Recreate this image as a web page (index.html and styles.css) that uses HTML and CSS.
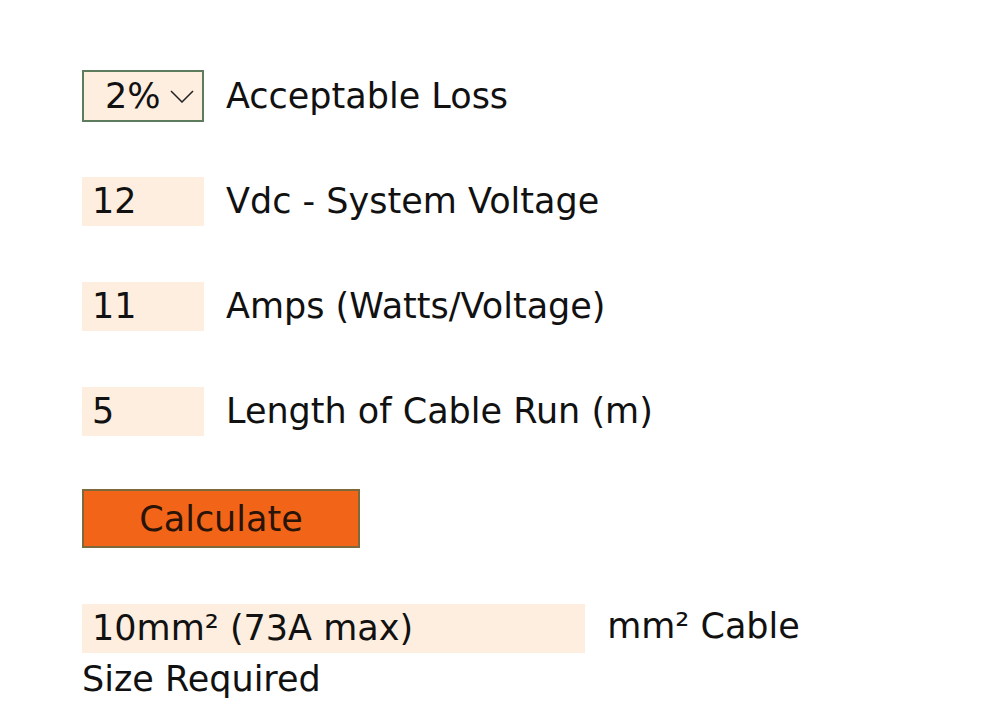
FILE: index.html
```html
<!DOCTYPE html>
<html lang="en">
<head>
    <meta charset="UTF-8">
    <meta name="viewport" content="width=device-width, initial-scale=1.0">
    <title>Cable Size Calculator</title>
    <link rel="stylesheet" href="styles.css">
</head>
<body>

    <div class="calculator">
        <div class="row">
            <select id="loss" class="field select-field">
                <option value="2" selected>2%</option>
                <option value="3">3%</option>
                <option value="5">5%</option>
            </select>
            <label for="loss">Acceptable Loss</label>
        </div>

        <div class="row">
            <input type="text" id="voltage" class="field" value="12">
            <label for="voltage">Vdc - System Voltage</label>
        </div>

        <div class="row">
            <input type="text" id="amps" class="field" value="11">
            <label for="amps">Amps (Watts/Voltage)</label>
        </div>

        <div class="row">
            <input type="text" id="length" class="field" value="5">
            <label for="length">Length of Cable Run (m)</label>
        </div>

        <div class="row">
            <button type="button" id="calc-btn">Calculate</button>
        </div>

        <p class="result">
            <input type="text" id="result" class="field result-field" value="10mm² (73A max)" readonly>
            <span class="result-label">mm² Cable Size Required</span>
        </p>
    </div>

</body>
</html>
```

FILE: styles.css
```css
/* Reset */
* {
    margin: 0;
    padding: 0;
    box-sizing: border-box;
}

body {
    font-family: 'DejaVu Sans', sans-serif;
    background-color: #fff;
    color: #111;
}

.calculator {
    width: 800px;
    padding: 70px 0 0 82px;
}

.row {
    display: flex;
    align-items: center;
    gap: 22px;
    height: 52px;
    margin-bottom: 53px;
    font-size: 35px;
}

/* Inputs */
.field {
    font-family: inherit;
    font-size: 35px;
    color: #111;
    width: 122px;
    height: 49px;
    padding: 0 10px;
    border: none;
    outline: none;
    background-color: #fdeedf;
}

.select-field {
    -webkit-appearance: none;
    appearance: none;
    height: 52px;
    padding-left: 21px;
    border: 2px solid #5d7b5d;
    background-image: url("data:image/svg+xml,%3Csvg xmlns='http://www.w3.org/2000/svg' width='24' height='13' viewBox='0 0 24 13'%3E%3Cpath d='M1 1l11 11 11-11' fill='none' stroke='%23222' stroke-width='1.5'/%3E%3C/svg%3E");
    background-repeat: no-repeat;
    background-position: right 8px center;
    background-size: 24px 13px;
}

/* Button */
#calc-btn {
    font-family: inherit;
    font-size: 35px;
    color: #2a1408;
    width: 278px;
    height: 59px;
    margin-top: 5px;
    background-color: #f26418;
    border: 2px solid #7c6a3c;
    cursor: pointer;
}

/* Result */
.result {
    padding-top: 5px;
    font-size: 35px;
    line-height: 52px;
}

.result-field {
    width: 503px;
    vertical-align: middle;
    margin-right: 11px;
}
```
